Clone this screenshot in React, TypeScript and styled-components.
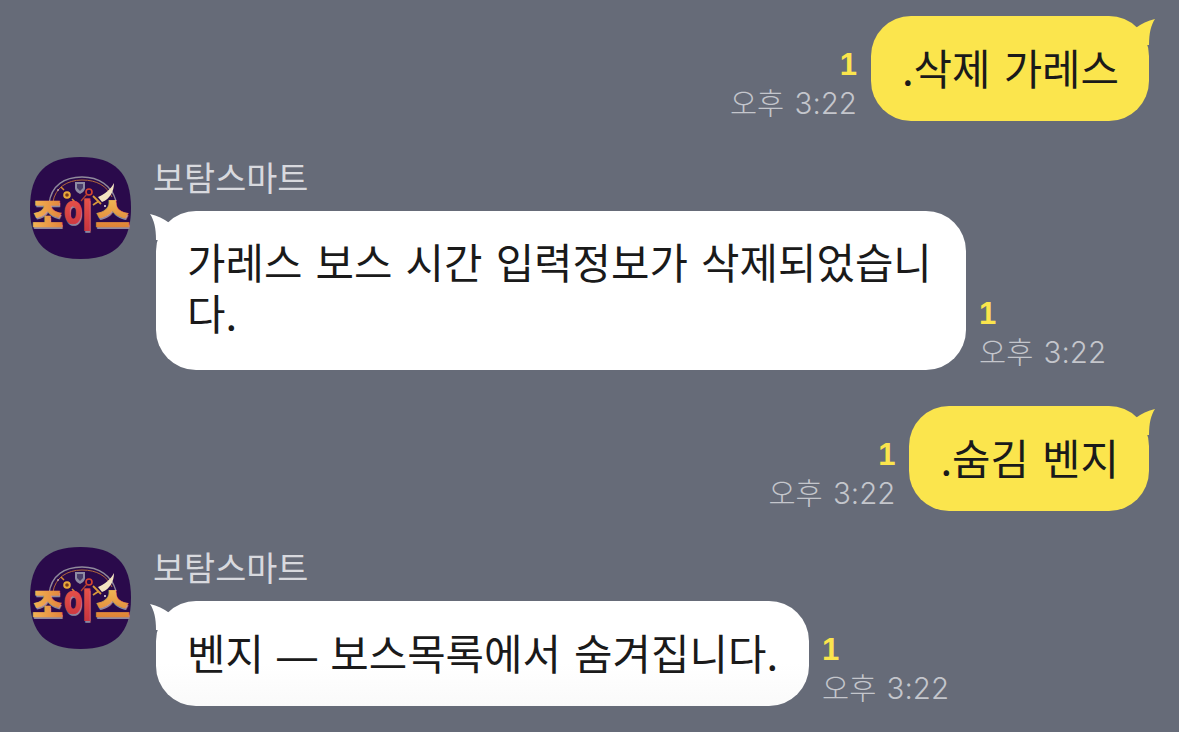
import React from "react";
import styled, { createGlobalStyle } from "styled-components";

const Global = createGlobalStyle`
  html, body { margin: 0; padding: 0; background: #666b78; }
  body { width: 1179px; height: 732px; overflow: hidden; }
`;

const Page = styled.main`
  display: flex;
  flex-direction: column;
  gap: 36px;
  width: 1179px;
  height: 732px;
  box-sizing: border-box;
  padding: 16px 30px 0 30px;
  background: #666b78;
  font-family: "Noto Sans CJK KR", "Liberation Sans", sans-serif;
`;

const Row = styled.section<{ $mine?: boolean }>`
  display: flex;
  justify-content: ${(p) => (p.$mine ? "flex-end" : "flex-start")};
  align-items: flex-start;
  gap: 22px;
`;

const Avatar = styled.svg`
  flex: none;
  width: 101px;
  height: 102px;
  display: block;
`;

const Column = styled.div`
  display: flex;
  flex-direction: column;
  align-items: flex-start;
`;

const Name = styled.div`
  height: 57px;
  margin-top: -3px;
  font-size: 33.800px;
  font-weight: 400;
  line-height: 46px;
  color: #d8d9de;
`;

const Line = styled.div<{ $mine?: boolean }>`
  display: flex;
  align-items: flex-end;
  gap: ${(p) => (p.$mine ? "14px" : "13px")};
  margin-left: ${(p) => (p.$mine ? "0" : "3px")};
`;

const Bubble = styled.div<{ $mine?: boolean; $fade?: boolean; $multiline?: boolean }>`
  position: relative;
  box-sizing: border-box;
  padding: 24px ${(p) => (p.$mine ? "30px" : "31px")} 27px 31px;
  border-radius: 40px;
  background: ${(p) =>
    p.$mine ? "#fbe54d" : p.$fade ? "linear-gradient(#fff 60%, #fafafa)" : "#fff"};
  color: #1a1a1a;
  font-size: 41.800px;
  font-weight: 400;
  line-height: 54px;
  word-spacing: 3.800px;
  word-break: break-all;
  ${(p) =>
    p.$multiline
      ? `
    width: 810px;
    padding: 25px 31px 32px;
    line-height: 51px;
  `
      : ""}
`;

const Dash = styled.span`
  font-family: "Liberation Sans", sans-serif;
  font-size: 40px;
  line-height: 0;
`;

const Tail = styled.svg<{ $mine?: boolean }>`
  position: absolute;
  top: 3px;
  width: 22px;
  height: 26px;
  ${(p) => (p.$mine ? "right: -6px;" : "left: -6px;")}
`;

const Meta = styled.div<{ $mine?: boolean }>`
  display: flex;
  flex-direction: column;
  align-items: ${(p) => (p.$mine ? "flex-end" : "flex-start")};
  padding-bottom: 2px;
`;

const Unread = styled.div`
  margin-bottom: 4px;
  font-size: 31px;
  line-height: 36px;
  font-weight: 700;
  color: #fbe54d;
  font-family: "Liberation Sans", sans-serif;
`;

const Time = styled.div`
  font-family: Inter, "Noto Sans CJK KR", sans-serif;
  font-size: 29.500px;
  font-weight: 300;
  line-height: 32px;
  word-spacing: 2px;
  color: #c4c6cc;
  white-space: nowrap;
`;

const LogoAvatar = () => (
  <Avatar viewBox="0 0 101 102" aria-hidden="true">
    <defs>
      <linearGradient id="gold" x1="0" y1="0" x2="0" y2="1">
        <stop offset="0" stopColor="#f6c860" />
        <stop offset="1" stopColor="#d9702a" />
      </linearGradient>
      <linearGradient id="red" x1="0" y1="0" x2="0" y2="1">
        <stop offset="0" stopColor="#ee5a4c" />
        <stop offset="1" stopColor="#c42e3c" />
      </linearGradient>
      <linearGradient id="goldLeft" x1="0" y1="0" x2="1" y2="0">
        <stop offset="0" stopColor="#f3b654" />
        <stop offset="1" stopColor="#e2823c" />
      </linearGradient>
    </defs>
    <path
      d="M50.500 0C85 0 101 16 101 51C101 86 85 102 50.500 102C16 102 0 86 0 51C0 16 16 0 50.500 0z"
      fill="#2a0a4b"
    />
    <path d="M19 47C21 28 35 20 52 20s30 9 34 24" fill="none" stroke="#8f8a9c" strokeWidth="1.300" />
    <path d="M23 45C25 31 37 23 52 23s25 6 30 17" fill="none" stroke="#b5693b" strokeWidth="1" />
    <circle cx="37" cy="38" r="3.800" fill="#e9a93a" />
    <circle cx="37" cy="38" r="1.800" fill="#7a3a1c" />
    <path d="M34 33l-3-3M42 42l3 3" stroke="#d68b36" strokeWidth="1.500" />
    <path d="M45 25h10v6c0 3-3 5-5 6-2-1-5-3-5-6z" fill="#8e8ba3" />
    <path d="M47 27h6v4l-3 3-3-3z" fill="#4a3e6a" />
    <circle cx="59" cy="35" r="3" fill="none" stroke="#d8452f" strokeWidth="1.600" />
    <path d="M57 37l-6 7" stroke="#b5412e" strokeWidth="1.200" />
    <path d="M68 40C74 38 81 32 84 26c0 8-4 16-12 19z" fill="#f2e3c0" />
    <path d="M63 39l8 8M69 44l-6 4" stroke="#d89a3a" strokeWidth="1.800" />
    <circle cx="44" cy="46" r="0.900" fill="#e8e6ef" />
    <circle cx="75" cy="49" r="1" fill="#e8e6ef" />
    <circle cx="28" cy="33" r="0.800" fill="#e8e6ef" />
    <g fontFamily="'Noto Sans CJK KR', sans-serif" fontWeight="900" fontSize="33">
      <text x="2" y="70" textLength="31" lengthAdjust="spacingAndGlyphs" fill="#8d88a0" transform="translate(0.8 2)">조</text>
      <text x="33" y="70" textLength="30" lengthAdjust="spacingAndGlyphs" fill="#8d88a0" transform="translate(0.8 2)">이</text>
      <text x="65" y="70" textLength="35" lengthAdjust="spacingAndGlyphs" fill="#8d88a0" transform="translate(0.8 2)">스</text>
      <text x="2" y="70" textLength="31" lengthAdjust="spacingAndGlyphs" fill="url(#goldLeft)" stroke="url(#goldLeft)" strokeWidth="0.700">조</text>
      <text x="33" y="70" textLength="30" lengthAdjust="spacingAndGlyphs" fill="url(#red)" stroke="url(#red)" strokeWidth="0.700">이</text>
      <text x="65" y="70" textLength="35" lengthAdjust="spacingAndGlyphs" fill="url(#gold)" stroke="url(#gold)" strokeWidth="0.700">스</text>
    </g>
  </Avatar>
);

const TailShape = ({ mine }: { mine?: boolean }) => (
  <Tail $mine={mine} viewBox="0 0 22 26" aria-hidden="true">
    {mine ? (
      <path d="M3 8.700C8 5 15 1.500 22 0C18 6 16 14 16 26H3z" fill="#fbe54d" />
    ) : (
      <path d="M19 8.700C14 5 7 1.500 0 0C4 6 6 14 6 26H19z" fill="#fff" />
    )}
  </Tail>
);

const Sent = ({ text }: { text: string }) => (
  <Row $mine>
    <Line $mine>
      <Meta $mine>
        <Unread>1</Unread>
        <Time>오후 3:22</Time>
      </Meta>
      <Bubble $mine>
        <TailShape mine />
        {text}
      </Bubble>
    </Line>
  </Row>
);

const Received = ({
  children,
  multiline,
  fade,
}: {
  children: React.ReactNode;
  multiline?: boolean;
  fade?: boolean;
}) => (
  <Row>
    <LogoAvatar />
    <Column>
      <Name>보탐스마트</Name>
      <Line>
        <Bubble $multiline={multiline} $fade={fade}>
          <TailShape />
          {children}
        </Bubble>
        <Meta>
          <Unread>1</Unread>
          <Time>오후 3:22</Time>
        </Meta>
      </Line>
    </Column>
  </Row>
);

export default function App() {
  return (
    <>
      <Global />
      <Page>
        <Sent text=".삭제 가레스" />
        <Received multiline>가레스 보스 시간 입력정보가 삭제되었습니다.</Received>
        <Sent text=".숨김 벤지" />
        <Received fade>
          벤지 <Dash>—</Dash> 보스목록에서 숨겨집니다.
        </Received>
      </Page>
    </>
  );
}
